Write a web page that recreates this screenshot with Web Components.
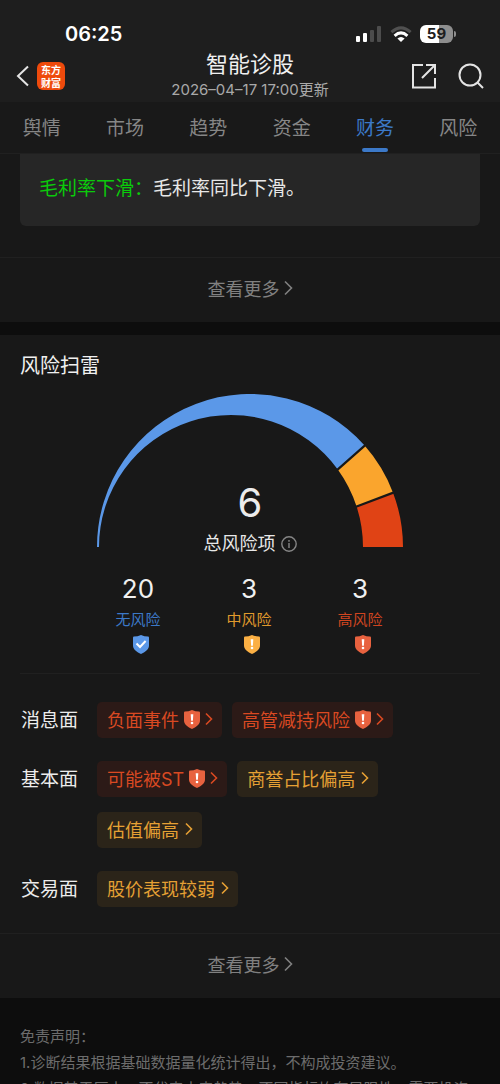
<!DOCTYPE html>
<html lang="zh-CN">
<head>
<meta charset="utf-8">
<meta name="viewport" content="width=device-width, initial-scale=1">
<title>智能诊股</title>
<style>
  html, body { margin: 0; height: 100%; background: #0d0d0d; }
  body { font-family: Inter, "Noto Sans CJK SC", sans-serif; color: #e8e8e8; }
</style>
</head>
<body>
<diagnosis-app></diagnosis-app>
<script>
const define = (name, html, setup) => {
  const template = document.createElement('template');
  template.innerHTML = html;
  customElements.define(name, class extends HTMLElement {
    constructor() {
      super();
      this.attachShadow({ mode: 'open' }).append(template.content.cloneNode(true));
    }
    connectedCallback() { if (setup) setup(this, this.shadowRoot); }
  });
};

define('status-bar', `
<style>
  :host { display: flex; justify-content: space-between; align-items: center; height: 32px; padding: 18px 44px 0 65px; color: #fff; }
  .time { font-size: 20px; font-weight: 600; }
  .right { display: flex; align-items: center; gap: 8px; }
  svg { display: block; }
  .battery { display: flex; align-items: center; gap: 1px; }
  .cell { width: 33px; height: 18px; border-radius: 6px; background: linear-gradient(90deg, #fff 59%, #8e8e8e 59%); color: #1e1e1e; font-size: 15px; font-weight: 700; line-height: 18px; text-align: center; }
  .cap { width: 2px; height: 6px; border-radius: 0 2px 2px 0; background: #8e8e8e; }
</style>
<span class="time">06:25</span>
<div class="right">
  <svg width="27" height="18" viewBox="0 0 27 18" aria-hidden="true">
    <rect x="1" y="11" width="4" height="6" rx="1" fill="#fff"/><rect x="8" y="8" width="4" height="9" rx="1" fill="#fff"/>
    <rect x="15" y="5" width="4" height="12" rx="1" fill="#4c4c4c"/><rect x="22" y="1" width="4" height="16" rx="1" fill="#4c4c4c"/>
  </svg>
  <svg width="22" height="17" viewBox="0 0 22 17" fill="none" stroke-width="3" aria-hidden="true">
    <path d="M1.4 6.2Q11 -2.4 20.6 6.2" stroke="#505050"/><path d="M4.6 9.8Q11 4 17.4 9.8" stroke="#fff"/>
    <path d="M11 16L7.4 12.6Q11 9.6 14.6 12.6Z" fill="#fff"/>
  </svg>
  <div class="battery"><div class="cell">59</div><div class="cap"></div></div>
</div>`);

define('app-header', `
<style>
  :host { display: grid; grid-template-columns: 1fr auto 1fr; align-items: center; height: 52px; padding: 0 16px; }
  .left, .right { display: flex; align-items: center; }
  .left { gap: 8px; }
  .right { justify-content: flex-end; gap: 21px; }
  button { border: 0; padding: 0; background: none; color: #e4e4e4; }
  svg { display: block; }
  .logo { display: grid; place-content: center; width: 28px; height: 28px; border-radius: 6px; background: #ee4a0c; color: #fff; font: 700 10px/13px "Noto Sans CJK SC", sans-serif; text-decoration: none; text-align: center; }
  .logo span { display: block; height: 13px; }
  .middle { text-align: center; }
  h1 { margin: 0; font-size: 22px; line-height: 28px; font-weight: 400; color: #f0f0f0; }
  p { margin: 0; font-size: 15px; line-height: 24px; color: #a9a9a9; }
</style>
<div class="left">
  <button aria-label="返回"><svg width="13" height="22" viewBox="0 0 13 22" fill="none" stroke="currentColor" stroke-width="2"><path d="M12 1.5L2 11L12 20.5"/></svg></button>
  <a class="logo" href="#"><span>东方</span><span>财富</span></a>
</div>
<div class="middle"><h1>智能诊股</h1><p>2026–04–17 17:00更新</p></div>
<div class="right">
  <button aria-label="分享"><svg width="26" height="26" viewBox="0 0 26 26" fill="none" stroke="currentColor" stroke-width="2"><path d="M12 2H2V24.500H24V15M11 15L24 2M15 2H24V11"/></svg></button>
  <button aria-label="搜索"><svg width="26" height="26" viewBox="0 0 26 26" fill="none" stroke="currentColor" stroke-width="2"><circle cx="12" cy="12" r="10.500"/><path d="M19.500 19.500L25 25"/></svg></button>
</div>`);

define('tab-item', `
<style>
  :host { flex: 1; display: block; }
  a { display: flex; flex-direction: column; align-items: center; justify-content: flex-end; height: 50px; color: #868686; font-size: 19px; line-height: 38px; text-decoration: none; }
  a::after { content: ""; width: 26px; height: 4px; border-radius: 2px; }
  :host([active]) a { color: #3c79c8; }
  :host([active]) a::after { background: #3c79c8; }
</style>
<a href="#"><slot></slot></a>`);

define('more-link', `
<style>
  :host { display: block; border-top: 1px solid #202020; }
  a { display: flex; justify-content: center; align-items: center; gap: 4px; height: 60px; padding-bottom: 4px; color: #808080; font-size: 18px; text-decoration: none; }
</style>
<a href="#">查看更多<svg width="9" height="16" viewBox="0 0 9 16" fill="none" stroke="currentColor" stroke-width="1.600" aria-hidden="true"><path d="M1 1.500L7.500 8L1 14.500"/></svg></a>`);

define('risk-shield', `
<style>
  :host { display: inline-block; color: #e8623f; }
  :host([level="none"]) { color: #5b98e8; }
  :host([level="mid"]) { color: #fbb044; }
  svg { display: block; }
  .check { display: none; }
  :host([level="none"]) .check { display: inline; }
  :host([level="none"]) .mark { display: none; }
</style>
<svg width="16" height="19" viewBox="0 0 16 19" aria-hidden="true">
  <path d="M1 1.600Q4.500 1.500 8 0Q11.500 1.500 15 1.600Q16 1.700 16 2.800V10.500C16 14.500 12 17.300 8 19C4 17.300 0 14.500 0 10.500V2.800Q0 1.700 1 1.600Z" fill="currentColor"/>
  <path class="check" d="M3.500 8.500L7 12L12.600 6" fill="none" stroke="#fff" stroke-width="2"/>
  <g class="mark" fill="#fff"><path d="M6.700 4.200H9.300L8.900 10.800H7.100Z"/><circle cx="8" cy="13" r="1.300"/></g>
</svg>`);

define('risk-count', `
<style>
  :host { display: flex; flex-direction: column; align-items: center; width: 111px; font-size: 15px; color: #cf4520; }
  :host([level="none"]) { color: #3c79c8; }
  :host([level="mid"]) { color: #e09a2c; }
  b { font-size: 26px; line-height: 32px; font-weight: 400; color: #f0f0f0; }
  span { line-height: 30px; }
  risk-shield { margin-left: 6px; }
</style>
<b><slot name="count"></slot></b><span><slot></slot></span><risk-shield></risk-shield>`,
(host, root) => root.querySelector('risk-shield').setAttribute('level', host.getAttribute('level')));

define('risk-tag', `
<style>
  :host { display: block; color: #d94922; --fill: #2c1a17; }
  :host([level="mid"]) { color: #e5a034; --fill: #2b2419; }
  a { display: flex; align-items: center; gap: 5px; height: 34px; padding: 0 9px 2px 10px; border-radius: 5px; background: var(--fill); color: inherit; font-size: 18px; text-decoration: none; }
  :host([level="mid"]) a { gap: 6px; }
  :host([level="mid"]) risk-shield { display: none; }
</style>
<a href="#"><slot></slot><risk-shield level="high"></risk-shield><svg width="8" height="14" viewBox="0 0 8 14" fill="none" stroke="currentColor" stroke-width="1.600" aria-hidden="true"><path d="M1 1.500L6.500 7L1 12.500"/></svg></a>`);

define('risk-row', `
<style>
  :host { display: flex; gap: 19px; }
  h3 { flex: none; margin: 0; height: 36px; font-size: 19px; line-height: 38px; font-weight: 400; color: #ececec; }
  div { display: flex; flex-wrap: wrap; align-content: flex-start; gap: 15px 10px; }
</style>
<h3><slot name="label"></slot></h3><div><slot></slot></div>`);

define('risk-gauge', `
<style>
  :host { display: grid; justify-items: center; }
  svg.arc, .total { grid-area: 1 / 1; }
  .arc { width: 306px; height: 153px; }
  .total { align-self: end; display: flex; flex-direction: column; align-items: center; margin-bottom: -11px; }
  strong { font-size: 40px; line-height: 54px; font-weight: 400; color: #ececec; }
  .name { display: flex; align-items: center; gap: 5px; font-size: 18px; line-height: 28px; }
  button { border: 0; padding: 0; background: none; color: #868686; }
  button svg { display: block; }
</style>
<svg class="arc" viewBox="0 0 306 153" role="img" aria-label="风险分布">
  <path fill="#5b98e8" d="M0 153A153 153 0 0 1 267.600 51.600L240.800 75.400A132 132 0 0 0 2 153Z"/>
  <path fill="#faa52d" d="M267.600 51.600A153 153 0 0 1 296 98.700L259.600 112.500A132 132 0 0 0 240.800 75.400Z"/>
  <path fill="#e04315" d="M296 98.700A153 153 0 0 1 306 153H266A132 132 0 0 0 259.600 112.500Z"/>
  <path stroke="#181818" stroke-width="2.200" d="M238 77.800L270 49.600M257 113.500L299 97.600"/>
</svg>
<div class="total">
  <strong>6</strong>
  <div class="name">总风险项<button aria-label="说明"><svg width="16" height="16" viewBox="0 0 16 16" fill="none" stroke="currentColor" stroke-width="1.400"><circle cx="8" cy="8" r="7.200"/><path d="M8 7V12M8 4V5.700"/></svg></button></div>
</div>`);

define('diagnosis-app', `
<style>
  :host { display: flex; flex-direction: column; height: 100vh; overflow: hidden; }
  .top { background: #1e1e1e; flex: none; }
  nav { display: flex; height: 51px; border-bottom: 1px solid #202020; background: #191919; flex: none; }
  main { flex: 1; min-height: 0; overflow-y: auto; scrollbar-width: none; }
  section { background: #181818; }
  .news { padding: 0 20px 31px; }
  .card { padding: 16px 19px 18px; border-radius: 0 0 6px 6px; background: #262626; font-size: 19px; line-height: 38px; }
  .card em { font-style: normal; color: #0bcb0b; }
  .scan { margin-top: 13px; }
  .body { padding: 15px 20px 26px; }
  h2 { margin: 0 0 12px; font-size: 20px; line-height: 32px; font-weight: 400; color: #f0f0f0; }
  .counts { display: flex; justify-content: center; margin: 26px 2px 0 0; }
  .rows { display: grid; gap: 23px; margin-top: 19px; padding: 28px 0 0 1px; border-top: 1px solid #202020; }
  footer { padding: 26px 20px; color: #6c6c6c; font-size: 15px; line-height: 26px; }
  footer p { margin: 0; }
</style>
<div class="top"><status-bar></status-bar><app-header></app-header></div>
<nav><tab-item>舆情</tab-item><tab-item>市场</tab-item><tab-item>趋势</tab-item><tab-item>资金</tab-item><tab-item active>财务</tab-item><tab-item>风险</tab-item></nav>
<main>
  <section>
    <div class="news"><div class="card"><em>毛利率下滑：</em>毛利率同比下滑。</div></div>
    <more-link></more-link>
  </section>
  <section class="scan">
    <div class="body">
      <h2>风险扫雷</h2>
      <risk-gauge></risk-gauge>
      <div class="counts">
        <risk-count level="none"><span slot="count">20</span>无风险</risk-count>
        <risk-count level="mid"><span slot="count">3</span>中风险</risk-count>
        <risk-count level="high"><span slot="count">3</span>高风险</risk-count>
      </div>
      <div class="rows">
        <risk-row><span slot="label">消息面</span><risk-tag>负面事件</risk-tag><risk-tag>高管减持风险</risk-tag></risk-row>
        <risk-row><span slot="label">基本面</span><risk-tag>可能被ST</risk-tag><risk-tag level="mid">商誉占比偏高</risk-tag><risk-tag level="mid">估值偏高</risk-tag></risk-row>
        <risk-row><span slot="label">交易面</span><risk-tag level="mid">股价表现较弱</risk-tag></risk-row>
      </div>
    </div>
    <more-link></more-link>
  </section>
  <footer><p>免责声明：</p><p>1.诊断结果根据基础数据量化统计得出，不构成投资建议。</p><p>2.数据基于历史，不代表未来趋势；不同指标均有局限性，需要投资者综合判断。</p></footer>
</main>`);
</script>
</body>
</html>
